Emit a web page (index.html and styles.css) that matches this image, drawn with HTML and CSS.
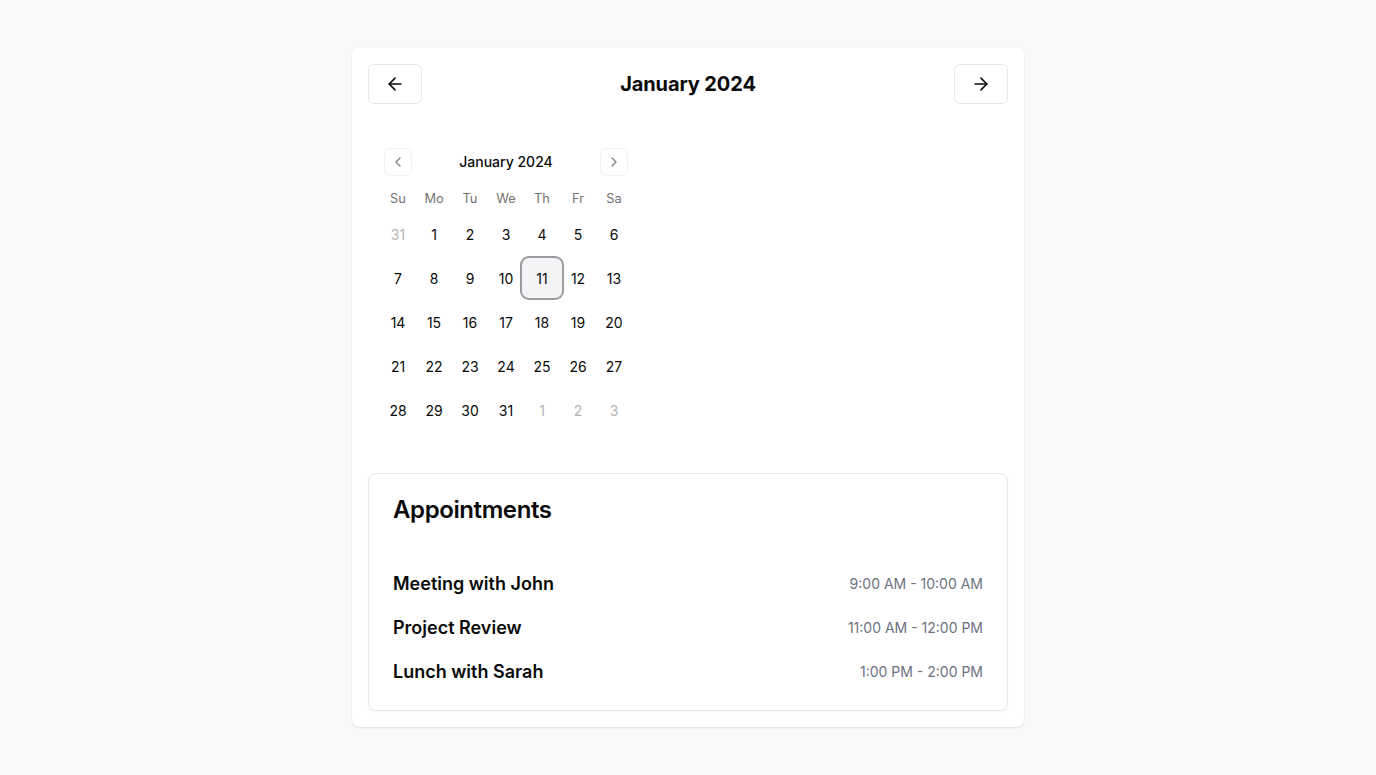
FILE: index.html
```html
<!DOCTYPE html>
<html lang="en">
<head>
<meta charset="utf-8">
<title>Calendar</title>
<link rel="stylesheet" href="styles.css">
</head>
<body>
<div class="page">
  <div class="card">
    <div class="header">
      <button class="icon-btn" aria-label="Previous month">
        <svg width="20" height="20" viewBox="0 0 24 24" fill="none" stroke="currentColor" stroke-width="2" stroke-linecap="round" stroke-linejoin="round"><path d="m12 19-7-7 7-7"/><path d="M19 12H5"/></svg>
      </button>
      <h1 class="title">January 2024</h1>
      <button class="icon-btn" aria-label="Next month">
        <svg width="20" height="20" viewBox="0 0 24 24" fill="none" stroke="currentColor" stroke-width="2" stroke-linecap="round" stroke-linejoin="round"><path d="M5 12h14"/><path d="m12 5 7 7-7 7"/></svg>
      </button>
    </div>

    <div class="calendar">
      <div class="caption">
        <button class="nav-btn" aria-label="Previous">
          <svg width="16" height="16" viewBox="0 0 24 24" fill="none" stroke="currentColor" stroke-width="2" stroke-linecap="round" stroke-linejoin="round"><path d="m15 18-6-6 6-6"/></svg>
        </button>
        <span class="caption-label">January 2024</span>
        <button class="nav-btn" aria-label="Next">
          <svg width="16" height="16" viewBox="0 0 24 24" fill="none" stroke="currentColor" stroke-width="2" stroke-linecap="round" stroke-linejoin="round"><path d="m9 18 6-6-6-6"/></svg>
        </button>
      </div>
      <div class="weekdays">
        <span>Su</span><span>Mo</span><span>Tu</span><span>We</span><span>Th</span><span>Fr</span><span>Sa</span>
      </div>
      <div class="week">
        <span class="day outside">31</span><span class="day">1</span><span class="day">2</span><span class="day">3</span><span class="day">4</span><span class="day">5</span><span class="day">6</span>
      </div>
      <div class="week">
        <span class="day">7</span><span class="day">8</span><span class="day">9</span><span class="day">10</span><span class="day selected">11</span><span class="day">12</span><span class="day">13</span>
      </div>
      <div class="week">
        <span class="day">14</span><span class="day">15</span><span class="day">16</span><span class="day">17</span><span class="day">18</span><span class="day">19</span><span class="day">20</span>
      </div>
      <div class="week">
        <span class="day">21</span><span class="day">22</span><span class="day">23</span><span class="day">24</span><span class="day">25</span><span class="day">26</span><span class="day">27</span>
      </div>
      <div class="week">
        <span class="day">28</span><span class="day">29</span><span class="day">30</span><span class="day">31</span><span class="day outside">1</span><span class="day outside">2</span><span class="day outside">3</span>
      </div>
    </div>

    <div class="appointments">
      <h2 class="appt-title">Appointments</h2>
      <ul class="appt-list">
        <li class="appt"><span class="appt-name">Meeting with John</span><span class="appt-time">9:00 AM - 10:00 AM</span></li>
        <li class="appt"><span class="appt-name">Project Review</span><span class="appt-time">11:00 AM - 12:00 PM</span></li>
        <li class="appt"><span class="appt-name">Lunch with Sarah</span><span class="appt-time">1:00 PM - 2:00 PM</span></li>
      </ul>
    </div>
  </div>
</div>
</body>
</html>
```

FILE: styles.css
```css
* { box-sizing: border-box; }

html, body {
  margin: 0;
  padding: 0;
  background: #f8f9fb;
  font-family: Inter, "Noto Sans", "Liberation Sans", sans-serif;
  color: #0a0a0a;
}

.page {
  display: flex;
  justify-content: center;
  padding: 48px 0;
}

.card {
  width: 672px;
  background: #ffffff;
  border-radius: 8px;
  padding: 16px;
  box-shadow: 0 1px 3px rgba(0, 0, 0, 0.08), 0 1px 2px rgba(0, 0, 0, 0.04);
}

.header {
  display: flex;
  align-items: center;
  justify-content: space-between;
  height: 40px;
}

.icon-btn {
  width: 54px;
  height: 40px;
  display: flex;
  align-items: center;
  justify-content: center;
  background: #ffffff;
  border: 1px solid #e5e7eb;
  border-radius: 6px;
  color: #0a0a0a;
  padding: 0;
  cursor: pointer;
}

.title {
  margin: 0;
  font-size: 20px;
  line-height: 28px;
  font-weight: 700;
  letter-spacing: -0.1px;
}

.calendar {
  width: 276px;
  padding: 12px;
  margin-top: 32px;
}

.caption {
  display: flex;
  align-items: center;
  justify-content: space-between;
  height: 28px;
  padding: 0 4px;
}

.caption-label {
  font-size: 14px;
  font-weight: 500;
  line-height: 20px;
}

.nav-btn {
  width: 28px;
  height: 28px;
  display: flex;
  align-items: center;
  justify-content: center;
  background: transparent;
  border: 1px solid #e5e7eb;
  border-radius: 6px;
  color: #0a0a0a;
  opacity: 0.5;
  padding: 0;
}

.weekdays {
  display: grid;
  grid-template-columns: repeat(7, 36px);
  margin-top: 12px;
}

.weekdays span {
  text-align: center;
  font-size: 12.8px;
  line-height: 19px;
  padding-top: 1px;
  color: #737373;
}

.week {
  display: grid;
  grid-template-columns: repeat(7, 36px);
  margin-top: 8px;
}

.day {
  height: 36px;
  display: flex;
  align-items: center;
  justify-content: center;
  font-size: 14px;
  color: #0a0a0a;
  border-radius: 6px;
}

.day.outside {
  color: #b5b5b5;
}

.day.selected {
  background: #f3f4f6;
  box-shadow: 0 0 0 2px #f3f4f6, 0 0 0 4px #9a9a9f;
  border-radius: 5px;
}

.appointments {
  margin-top: 33px;
  border: 1px solid #e5e7eb;
  border-radius: 8px;
  box-shadow: 0 1px 2px rgba(0, 0, 0, 0.04);
}

.appt-title {
  margin: 0;
  padding: 24px 24px 0;
  font-size: 24px;
  line-height: 24px;
  font-weight: 600;
  letter-spacing: -0.4px;
}

.appt-list {
  list-style: none;
  margin: 0;
  padding: 40px 24px 16px;
}

.appt {
  display: flex;
  align-items: center;
  justify-content: space-between;
  height: 44px;
}

.appt-name {
  font-size: 18px;
  line-height: 28px;
  font-weight: 600;
}

.appt-time {
  font-size: 14px;
  line-height: 20px;
  color: #6b7280;
}
```
